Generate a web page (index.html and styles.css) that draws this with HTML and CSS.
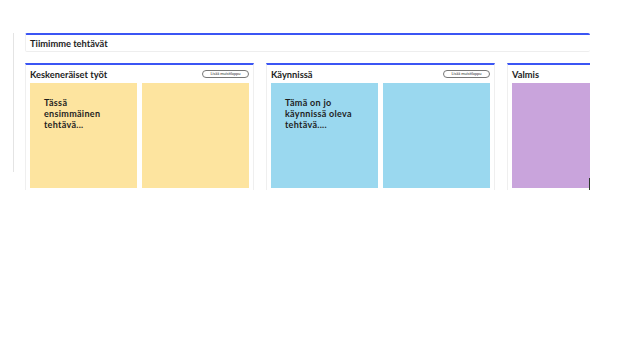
FILE: index.html
```html
<!DOCTYPE html>
<html lang="fi">
<head>
<meta charset="utf-8">
<title>Tiimimme tehtävät</title>
<link rel="stylesheet" href="styles.css">
</head>
<body>
<div class="page">
  <div class="rail"></div>
  <main class="board">
    <header class="board-head">Tiimimme tehtävät</header>
    <div class="columns">
      <section class="column">
        <div class="col-head">
          <h2 class="col-title">Keskeneräiset työt</h2>
          <button class="add-btn">Lisää muistilappu</button>
        </div>
        <div class="notes">
          <div class="note yellow"><p class="note-text">Tässä ensimmäinen tehtävä...</p></div>
          <div class="note yellow"></div>
        </div>
      </section>
      <section class="column">
        <div class="col-head">
          <h2 class="col-title">Käynnissä</h2>
          <button class="add-btn">Lisää muistilappu</button>
        </div>
        <div class="notes">
          <div class="note blue"><p class="note-text">Tämä on jo käynnissä oleva tehtävä....</p></div>
          <div class="note blue"></div>
        </div>
      </section>
      <section class="column">
        <div class="col-head">
          <h2 class="col-title">Valmis</h2>
        </div>
        <div class="notes">
          <div class="note purple"></div>
          <div class="note purple"></div>
        </div>
      </section>
    </div>
    <div class="scroll-mark"></div>
  </main>
</div>
</body>
</html>
```

FILE: styles.css
```css
* { box-sizing: border-box; }
html, body { margin: 0; padding: 0; background: #fff; }
body {
  font-family: Lato, "Open Sans", sans-serif;
  color: #1e1e1e;
}
.page {
  display: flex;
  align-items: flex-start;
}
.rail {
  width: 14px;
  height: 139px;
  margin-top: 33px;
  border-right: 1px solid #e4e4e4;
  flex: none;
}
.board {
  position: relative;
  margin-left: 11px;
  margin-top: 33px;
  width: 565px;
  height: 157px;
  overflow: hidden;
}
.board-head {
  height: 19px;
  border-top: 2px solid #3b55f4;
  border-left: 1px solid #f0f0f0;
  border-bottom: 1px solid #eeeeee;
  border-radius: 2px;
  padding-left: 4px;
  display: flex;
  align-items: center;
  font-weight: 700;
  font-size: 9.3px;
}
.columns {
  display: flex;
  gap: 12px;
  margin-top: 11px;
  width: 800px;
}
.column {
  width: 229px;
  flex: none;
  border-top: 2px solid #3b55f4;
  border-left: 1px solid #efefef;
  border-right: 1px solid #efefef;
  padding: 0 4px 6px;
}
.col-head {
  height: 18px;
  display: flex;
  align-items: center;
  justify-content: space-between;
}
.col-title {
  margin: 0;
  font-size: 9.3px;
  font-weight: 700;
}
.add-btn {
  font-family: inherit;
  font-size: 4px;
  line-height: 6px;
  height: 8px;
  width: 47px;
  padding: 0;
  border: 1px solid #777;
  border-radius: 4px;
  background: #fff;
  color: #333;
}
.notes {
  display: flex;
  gap: 5px;
}
.note {
  width: 107px;
  height: 105px;
  flex: none;
  padding: 14px 14px;
}
.yellow { background: #fde49f; }
.blue { background: #9ad8ef; }
.purple { background: #c9a4dc; }
.note-text {
  margin: 0;
  font-weight: 700;
  font-size: 9px;
  line-height: 11px;
  letter-spacing: 0.3px;
}
.scroll-mark {
  position: absolute;
  right: 0;
  bottom: 0;
  width: 1px;
  height: 12px;
  background: #2c3a2c;
}
```
